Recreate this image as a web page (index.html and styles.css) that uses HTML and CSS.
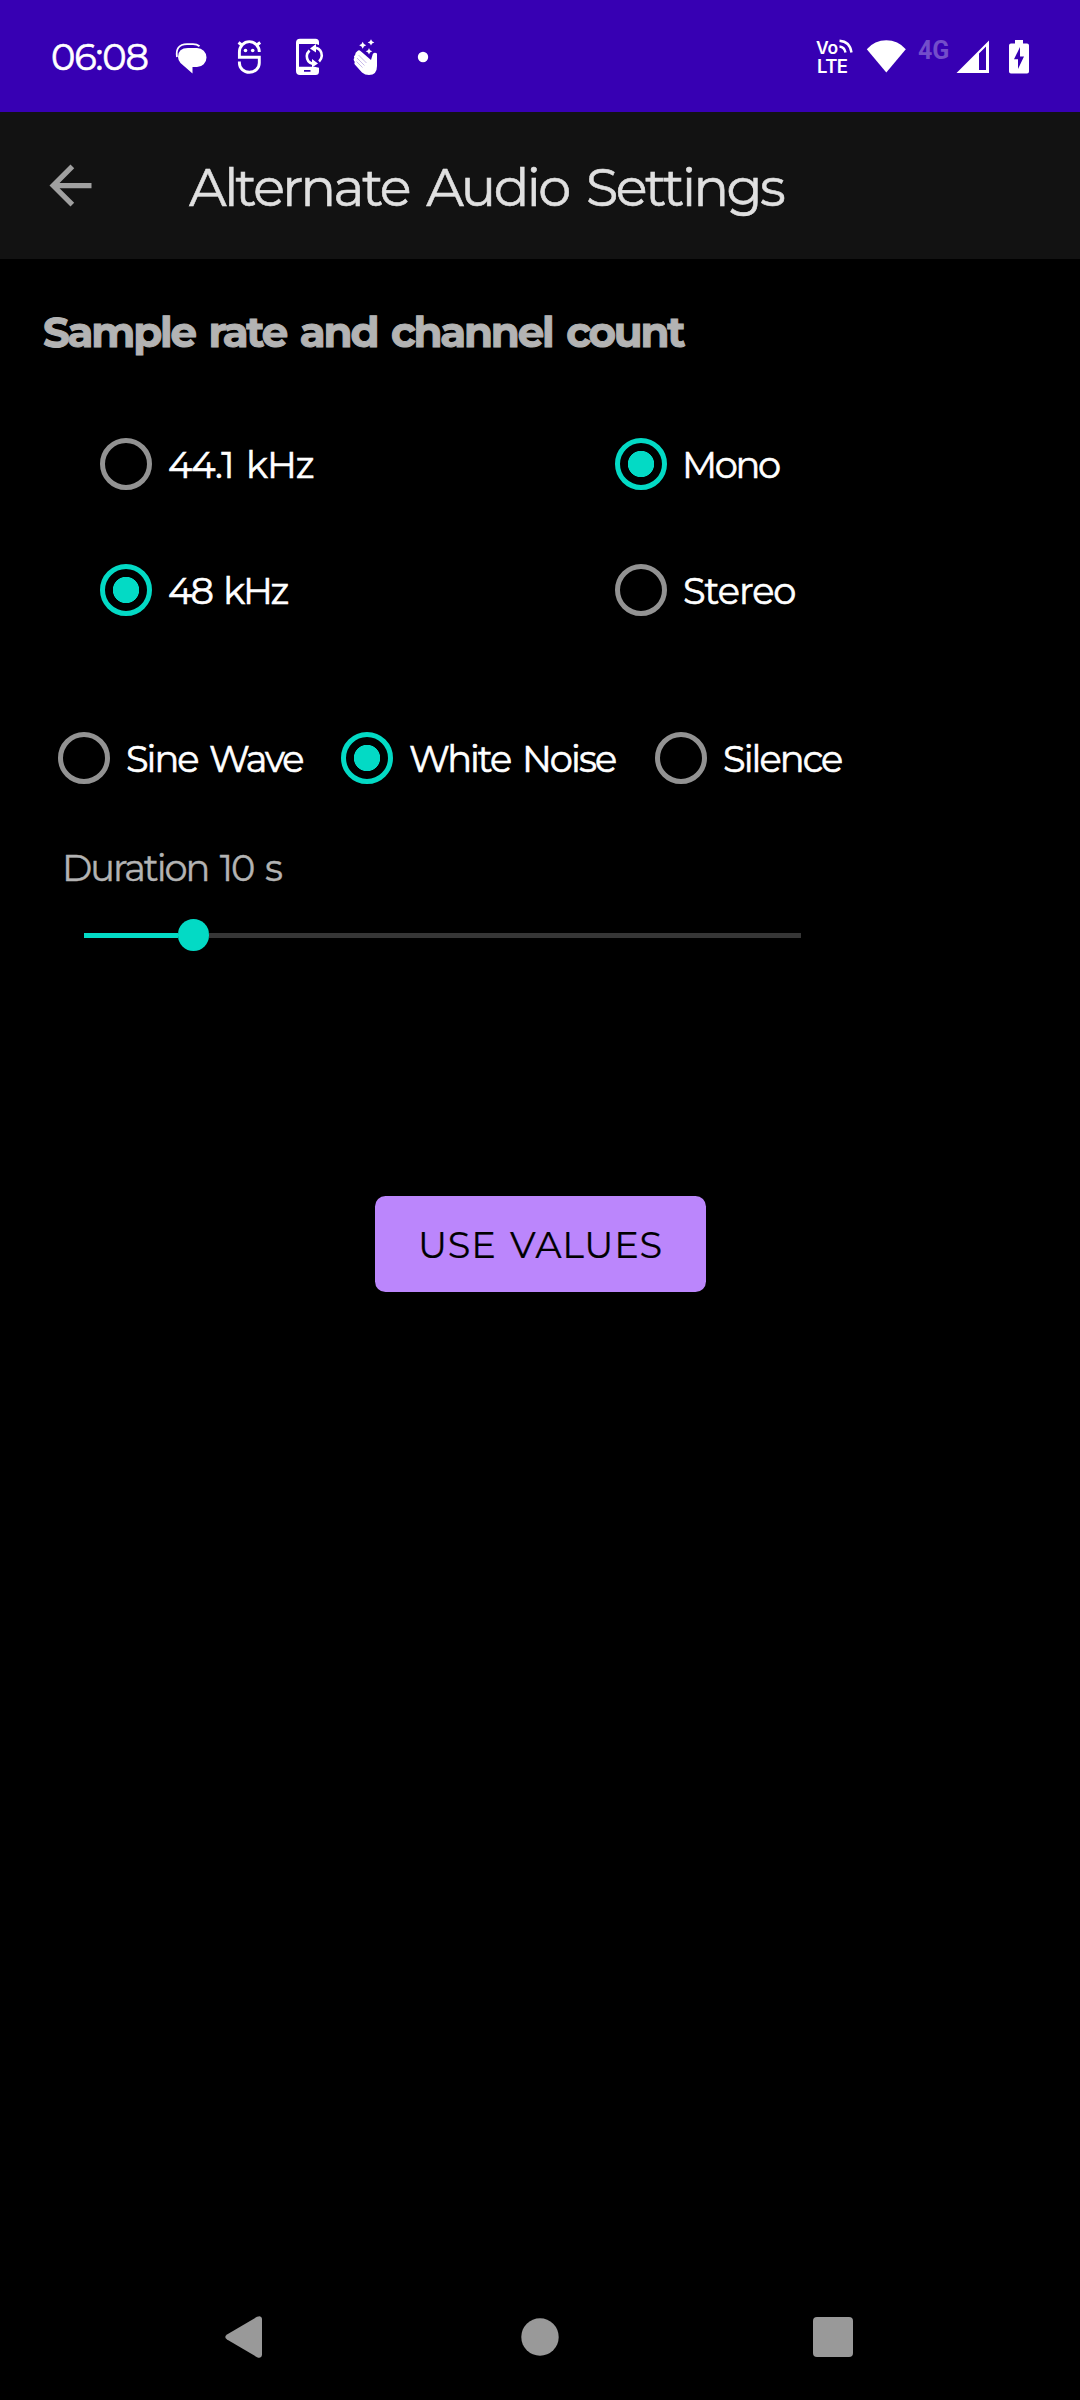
FILE: index.html
```
<!DOCTYPE html>
<html lang="en">
<head>
<meta charset="utf-8">
<title>Alternate Audio Settings</title>
<link rel="stylesheet" href="styles.css">
</head>
<body>
<div class="screen">
  <header class="status">
    <span class="clock">06:08</span>
    <div class="status-icons">
      <svg class="ic chat" viewBox="0 0 40 40"><path d="M16 11h9a9.500 9.500 0 0 1 0 19h-4.500v6.500L8.500 26Q6 23 6 20q0-9 10-9z" fill="#fff"/><path d="M5 20Q3 7.500 15 7.200h6q4 0 6.500 2" fill="none" stroke="#fff" stroke-width="1.800"/></svg>
      <svg class="ic mask" viewBox="0 0 40 40"><path d="M30.300 15A9.950 10.400 0 0 0 10.400 15v5.300h19.900V26a9.950 9.300 0 0 1-19.900 0v-1.500M9.500 5.500l4 3M31.200 5.500l-4 3" fill="none" stroke="#fff" stroke-width="2.900"/><circle cx="16.500" cy="13.500" r="1.800" fill="#fff"/><circle cx="23.700" cy="13.500" r="1.800" fill="#fff"/></svg>
      <svg class="ic phone" viewBox="0 0 40 40"><path fill="#fff" fill-rule="evenodd" d="M11 1.800h15.500q3.500 0 3.500 3.500V8l-3-1H10v22.700h15.500l4.500 1v3.800q0 3.500-3.500 3.500H11q-4 0-4-4V5.800q0-4 4-4zM15 33v1.700h6.500V33z"/><g fill="none" stroke="#fff" stroke-width="2.600"><path d="M23.500 26.800Q17.800 25 17.800 19q.2-3 2.700-5.500"/><path d="M27 10.800q5.600 1.500 5.800 7.900-.2 3.500-2.700 5.800"/></g><path fill="#fff" d="M21 11.500l6-4.500v8.500zM29 26.500l-6-4.500v8.500z"/></svg>
      <svg class="ic hand" viewBox="0 0 40 40"><path fill="#fff" d="M11.500 14q1.500-1.500 3 0L25 23l1.800-6q1.700-2 4.200-.5V29q0 9-8 9-4 0-7-2.500L8.800 27.500q-1-1.500 0-2.500-2-2.500-.5-4-1-2 .8-3 0-2.500 2.400-4z"/><path d="M12.500 18l8 8M11 21l7.500 7.500M10.500 24.500l6 6" stroke="#3700b3" stroke-opacity=".35" stroke-width=".8"/><path fill="#fff" d="M16.700 4.800l1.200 2.300 2.300 1.200-2.300 1.200-1.200 2.300-1.200-2.300-2.300-1.200 2.300-1.200zM25 2.200l1.100 2.100 2.200 1.100-2.200 1.100-1.100 2.100-1.100-2.100-2.200-1.100 2.200-1.100zM23 11l1 2.200 2.300 1.100-2.300 1.100-1 2.200-1-2.200-2.300-1.100 2.300-1.100z"/></svg>
      <svg class="ic dot" viewBox="0 0 40 40"><circle cx="20" cy="20" r="5.200" fill="#fff"/></svg>
    </div>
    <div class="status-right">
      <div class="volte">
        <div class="vo"><span>Vo</span><svg width="14" height="15" viewBox="0 0 14 15"><path d="M.5 7.500q5 .5 6 6M.5 1.800q10.500.8 12 11.700" fill="none" stroke="#fff" stroke-width="2.400"/></svg></div>
        <div class="lte">LTE</div>
      </div>
      <svg class="ic wifi" viewBox="0 0 40 40"><path d="M.8 12.300a25.500 25.500 0 0 1 39 0L20.300 35.600z" fill="#fff"/></svg>
      <span class="net">4G</span>
      <svg class="ic signal" viewBox="0 0 40 40"><path fill="#fff" fill-rule="evenodd" d="M3.500 36L36 3.500V36zM26 16.500V33h7V9.500z"/></svg>
      <svg class="ic battery" viewBox="0 0 40 40"><path fill="#fff" fill-rule="evenodd" d="M16 3h8v3.500h4q2 0 2 2V34.500q0 2-2 2H12q-2 0-2-2V8.500q0-2 2-2h4zM21 10l-6 12.300h4V32l6-12.500H21z"/></svg>
    </div>
  </header>
  <div class="appbar">
    <svg class="back" viewBox="0 0 24 24"><path fill="#a0a0a0" d="M20 11H7.830l5.590-5.590L12 4l-8 8 8 8 1.410-1.410L7.830 13H20z"/></svg>
    <h1>Alternate Audio Settings</h1>
  </div>
  <main>
    <h2>Sample rate and channel count</h2>
    <div class="grid">
      <label class="radio"><i></i><span class="t1">44.1 kHz</span></label>
      <label class="radio on"><i></i><span class="t3">Mono</span></label>
      <label class="radio on"><i></i><span class="t2">48 kHz</span></label>
      <label class="radio"><i></i><span class="t4">Stereo</span></label>
    </div>
    <div class="signals">
      <label class="radio sine"><i></i><span class="t5">Sine Wave</span></label>
      <label class="radio on noise"><i></i><span class="t6">White Noise</span></label>
      <label class="radio"><i></i><span class="t7">Silence</span></label>
    </div>
    <p class="duration">Duration 10 s</p>
    <div class="slider"><div class="fill"></div><div class="thumb"></div><div class="rest"></div></div>
    <button class="use">USE VALUES</button>
  </main>
  <nav class="nav">
    <svg viewBox="0 0 60 60"><path d="M10 27.500L40 9.800q4.500-2 5 2V48q-.5 4-5 2.200L10 32.500q-3.500-2.500 0-5z" fill="#999"/></svg>
    <svg viewBox="0 0 60 60"><circle cx="30" cy="30" r="18.700" fill="#999"/></svg>
    <svg viewBox="0 0 60 60"><rect x="10" y="10" width="40" height="40" rx="4" fill="#999"/></svg>
  </nav>
</div>
</body>
</html>
```
FILE: styles.css
```
* { box-sizing: border-box; margin: 0; padding: 0; }
body { background: #000; }
.screen {
  width: 1080px; height: 2400px; display: flex; flex-direction: column;
  background: #000; color: #fff;
  font: 400 36.750px/44px Montserrat, Inter, sans-serif;
  word-spacing: 4px;
  -webkit-text-stroke: .6px currentColor;
}

.status { height: 112px; background: #3700b3; display: flex; align-items: center; padding: 2px 41px 0 51px; }
.clock { width: 121px; letter-spacing: -1.100px; white-space: nowrap; }
.ic { width: 40px; height: 40px; display: block; flex: none; }
.status-icons { display: flex; }
.mask { margin-left: 17px; }
.phone { margin-left: 20px; }
.hand, .dot { margin-left: 17px; }
.status-right { margin-left: auto; display: flex; align-items: center; -webkit-text-stroke: 0; }
.volte { width: 50px; height: 36px; font-family: Inter, sans-serif; font-weight: 600; }
.vo { display: flex; gap: 1px; height: 18px; font-size: 17.500px; line-height: 18px; letter-spacing: -.3px; }
.lte { font-size: 18.500px; line-height: 19px; letter-spacing: -.6px; padding-left: 1px; }
.net { width: 35px; margin-left: 12px; align-self: flex-start; font: 700 25px/30px Roboto, sans-serif; color: #734dca; margin-top: -1px; }
.battery { margin-left: 6px; }

.appbar { height: 147px; background: #121212; display: flex; align-items: center; padding-left: 39px; }
.back { width: 63px; height: 63px; margin-top: -1px; }
h1 { margin-left: 87px; padding-top: 3px; font-size: 52.500px; line-height: 64px; font-weight: 400; letter-spacing: -2.500px; word-spacing: 6px; color: #e0e0e0; white-space: nowrap; }

main { flex: 1; display: flex; flex-direction: column; align-items: flex-start; }
h2 { margin: 48px 0 0 43px; font-size: 42px; line-height: 50px; font-weight: 700; letter-spacing: -2.200px; -webkit-text-stroke-width: 1px; color: #b3b3b3; white-space: nowrap; }
.grid { margin: 44px 0 0 84px; display: grid; grid-template-columns: 515px 300px; grid-auto-rows: 126px; }
.radio { display: flex; align-items: center; white-space: nowrap; }
.radio i {
  width: 52.500px; height: 52.500px; margin: 0 15.750px; flex: none;
  border: 5.250px solid #929292; border-radius: 50%;
}
.radio span { padding-top: 1px; }
.radio.on i { border-color: #03dac5; background: radial-gradient(circle, #03dac5 12.800px, transparent 13.500px); }
.t1 { letter-spacing: -1.100px; }
.t2 { letter-spacing: -2.200px; }
.radio .t3 { letter-spacing: -2.300px; margin-left: -1px; }
.t4 { letter-spacing: -1.040px; }
.t5 { letter-spacing: -2.040px; }
.t6 { letter-spacing: -1.950px; }
.t7 { letter-spacing: -1.950px; }
.signals { margin: 42px 0 0 42px; height: 126px; display: flex; }
.sine { width: 283px; }
.noise { width: 314px; }
.duration { margin: 25px 0 0 62px; letter-spacing: -2.050px; color: #b3b3b3; -webkit-text-stroke-width: .4px; }
.slider { margin: 29px 0 0 84px; width: 717px; height: 32px; display: flex; align-items: center; }
.fill { width: 93.500px; height: 5px; background: #03dac5; }
.thumb { width: 31.500px; height: 31.500px; border-radius: 50%; background: #03dac5; }
.rest { flex: 1; height: 5px; background: #363636; }
.use {
  margin: 245px 0 0 375px; padding-top: 1px; width: 331px; height: 96px; border: 0; border-radius: 10.500px;
  background: #bb86fc; color: #000; font: inherit; letter-spacing: .800px; word-spacing: 3px; white-space: nowrap;
  -webkit-text-stroke: .2px #000;
}

.nav { height: 126px; display: flex; padding-left: 217px; gap: 233px; align-items: center; }
.nav svg { width: 60px; height: 60px; }
```
